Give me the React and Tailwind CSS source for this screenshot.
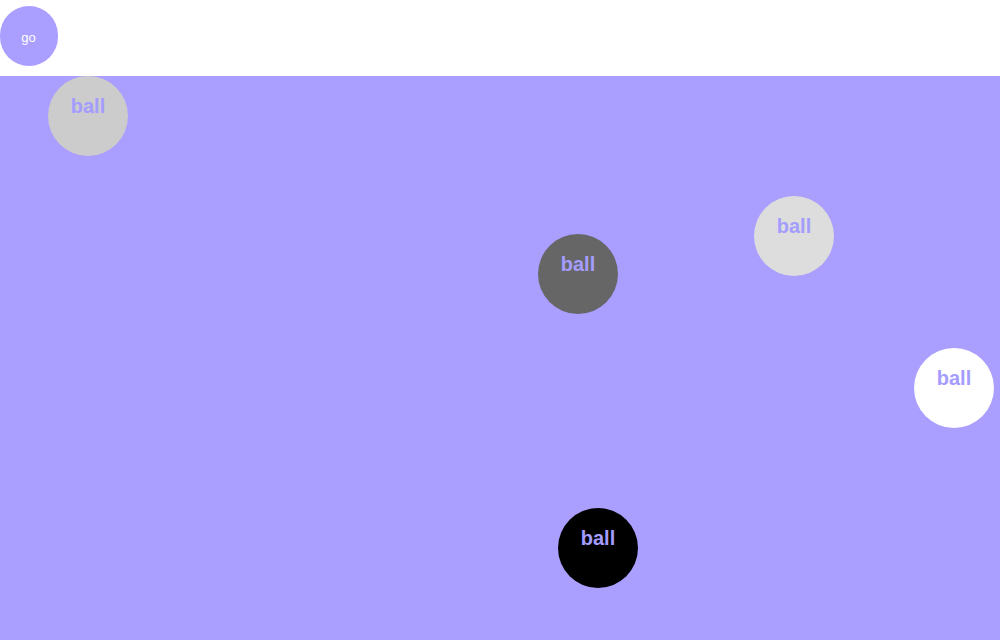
import React from 'react';

const BALLS = [
  { left: 48, top: 0, color: '#cccccc' },
  { left: 754, top: 120, color: '#dddddd' },
  { left: 538, top: 158, color: '#666666' },
  { left: 914, top: 272, color: '#ffffff' },
  { left: 558, top: 432, color: '#000000' },
];

function Ball({ left, top, color }) {
  return (
    <div
      className="absolute w-20 h-20 rounded-full flex justify-center pt-[19px] text-[20px] font-bold leading-[23px] text-[#a49dff]"
      style={{ left, top, backgroundColor: color }}
    >
      ball
    </div>
  );
}

export default function App() {
  return (
    <div className="w-[1000px] h-[640px] flex flex-col bg-white overflow-hidden font-['Liberation_Sans',Arial,sans-serif]">
      <div className="h-[76px] pt-[6px] shrink-0">
        <button className="w-[58px] h-[60px] rounded-full bg-[#aa9eff] text-white text-[13px] flex items-center justify-center pt-[3px] pr-[1px]">
          go
        </button>
      </div>
      <div className="relative flex-1 bg-[#aa9eff]">
        {BALLS.map((b, i) => (
          <Ball key={i} {...b} />
        ))}
      </div>
    </div>
  );
}
